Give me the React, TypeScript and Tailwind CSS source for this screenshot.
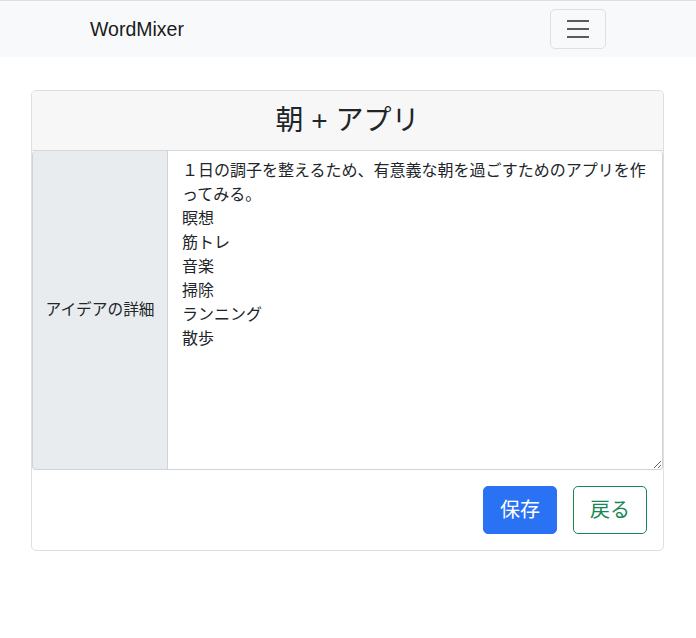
import { useState } from "react";

const detail =
  "１日の調子を整えるため、有意義な朝を過ごすためのアプリを作ってみる。\n瞑想\n筋トレ\n音楽\n掃除\nランニング\n散歩";

export default function App() {
  const [text, setText] = useState(detail);

  return (
    <div className="min-h-screen bg-white text-[#212529] font-['Liberation_Sans','Noto_Sans_CJK_JP',sans-serif]">
      <nav className="h-[57px] border-t border-[#dedede] bg-[#f8f9fa] flex items-center justify-between px-[90px]">
        <a href="#" className="text-[19.5px] leading-[30px] text-[#1a1a1a]">WordMixer</a>
        <button className="w-[56px] h-[40px] border border-black/10 rounded-[5px] flex items-center justify-center">
          <svg width="30" height="30" viewBox="0 0 30 30">
            <path d="M4 7h22M4 15h22M4 23h22" stroke="rgba(33,37,41,0.75)" strokeWidth="2" strokeLinecap="butt" />
          </svg>
        </button>
      </nav>

      <div className="mt-[33px] mx-[31px] w-[633px] border border-black/[0.125] rounded-[5px] overflow-hidden">
        <div className="h-[60px] bg-[#f7f7f7] border-b border-black/[0.125] flex items-center justify-center">
          <h3 className="text-[28px] leading-none text-[#212529]">朝 + アプリ</h3>
        </div>

        <div className="flex h-[319px]">
          <div className="w-[136px] shrink-0 bg-[#e9ecef] border-l border-b border-r border-[#ced4da] rounded-l-[4px] flex items-center justify-center text-[15.7px]">
            アイデアの詳細
          </div>
          <textarea
            value={text}
            onChange={(e) => setText(e.target.value)}
            className="flex-1 min-w-0 border-b border-r border-[#ced4da] rounded-r-[4px] pl-[14px] pr-[12px] py-[6px] text-[16px] leading-[24px] text-[#212529] outline-none font-['Noto_Sans_CJK_JP',sans-serif]"
          />
        </div>

        <div className="flex justify-end gap-4 p-4">
          <button className="h-[48px] px-4 rounded-[5px] bg-[#2a72f4] border border-[#2a72f4] text-white text-[20px]">保存</button>
          <button className="h-[48px] px-4 rounded-[5px] border border-[#198754] text-[#198754] text-[20px]">戻る</button>
        </div>
      </div>
    </div>
  );
}
